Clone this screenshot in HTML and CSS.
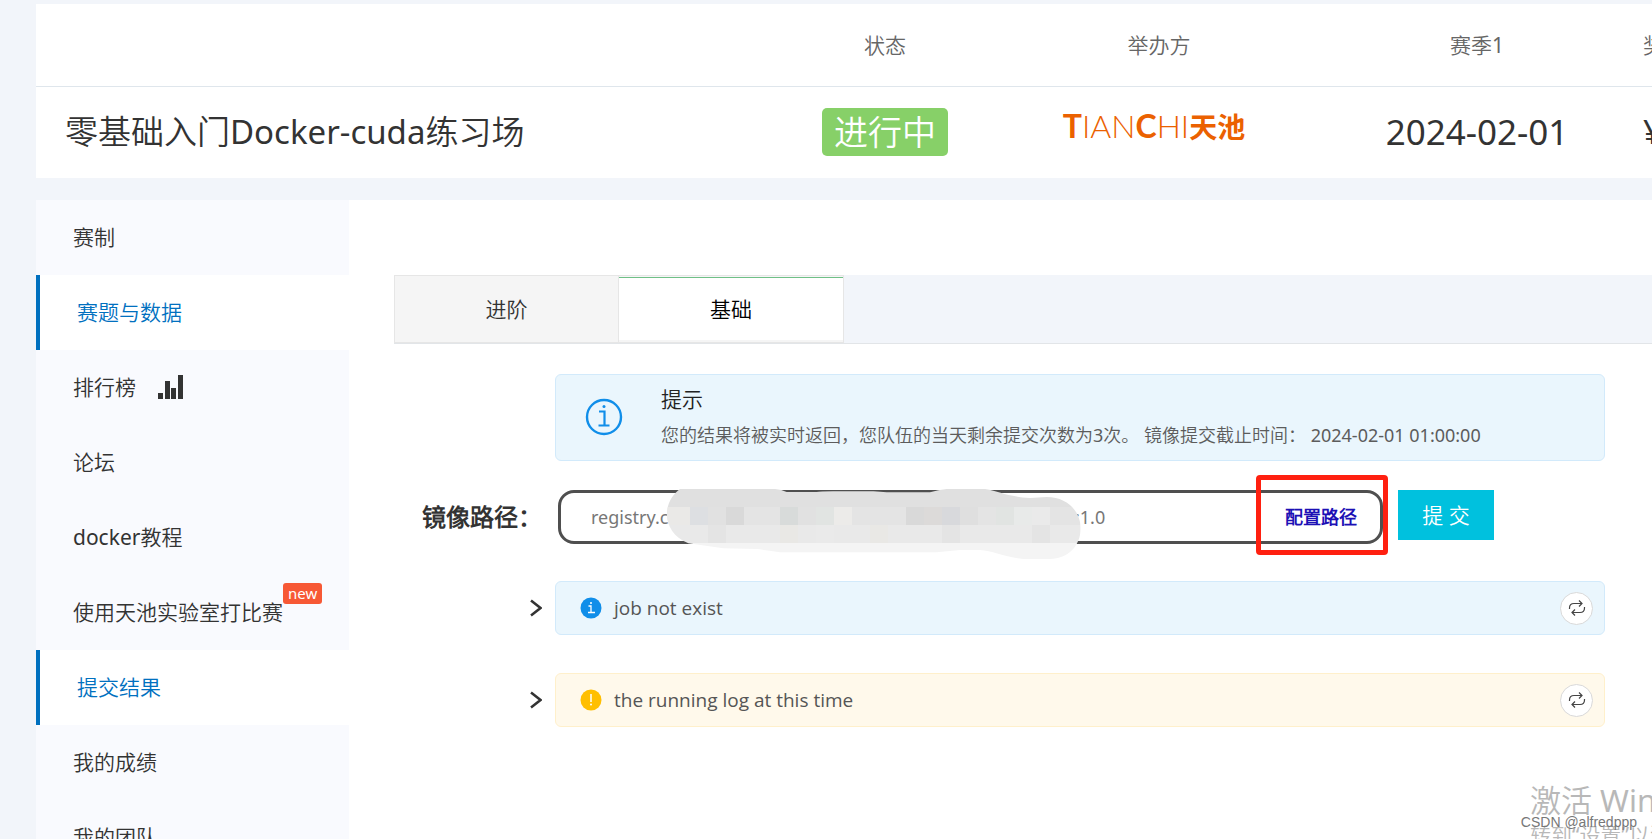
FILE: index.html
```html
<!DOCTYPE html>
<html lang="zh-CN">
<head>
<meta charset="utf-8">
<title>零基础入门Docker-cuda练习场</title>
<link rel="stylesheet" href="styles.css">
</head>
<body>
<div class="page">
  <header class="summary">
    <table class="summary-table">
      <thead>
        <tr><th></th><th class="col-status">状态</th><th class="col-org">举办方</th><th class="col-season">赛季1</th><th class="col-prize">奖金</th></tr>
      </thead>
      <tbody>
        <tr>
          <td class="title">零基础入门Docker-cuda练习场</td>
          <td><span class="status">进行中</span></td>
          <td><span class="logo"><b>T</b>IAN<b>C</b>HI<b class="logo-cn">天池</b></span></td>
          <td class="date">2024-02-01</td>
          <td class="col-prize">¥0</td>
        </tr>
      </tbody>
    </table>
  </header>

  <div class="layout">
    <nav class="sidebar">
      <a class="nav-item" href="#">赛制</a>
      <a class="nav-item active" href="#">赛题与数据</a>
      <a class="nav-item" href="#">排行榜
        <svg class="bars" width="25" height="24" viewBox="0 0 25 24" fill="#333"><path d="M0 18h5v6H0zM7 6h5v18H7zM13 13h5v11h-5zM20 0h5v24h-5z"/></svg>
      </a>
      <a class="nav-item" href="#">论坛</a>
      <a class="nav-item" href="#">docker教程</a>
      <a class="nav-item" href="#">使用天池实验室打比赛<span class="badge">new</span></a>
      <a class="nav-item active" href="#">提交结果</a>
      <a class="nav-item" href="#">我的成绩</a>
      <a class="nav-item" href="#">我的团队</a>
    </nav>

    <main class="content">
      <div class="tabs" role="tablist">
        <button class="tab" role="tab" aria-selected="false">进阶</button>
        <button class="tab selected" role="tab" aria-selected="true">基础</button>
      </div>

      <div class="panel">
        <section class="alert notice">
          <svg class="notice-icon" width="38" height="38" viewBox="0 0 38 38" fill="none" stroke="#108ee9"><circle cx="19" cy="19" r="17" stroke-width="2.400"/><path d="M14 13.500h5.500v14M13.500 27.500h11" stroke-width="2.200"/><circle cx="19" cy="8.500" r="1.500" fill="#108ee9" stroke="none"/></svg>
          <div>
            <h2 class="notice-title">提示</h2>
            <p class="notice-text">您的结果将被实时返回，您队伍的当天剩余提交次数为3次。 镜像提交截止时间： 2024-02-01 01:00:00</p>
          </div>
        </section>

        <form class="submit-row">
          <label class="path-label" for="path">镜像路径：</label>
          <div class="field">
            <input class="path-input" id="path" type="text" value="registry.c">
            <span class="path-tag">:1.0</span>
            <a class="config" href="#">配置路径</a>
            <svg class="smudge" width="430" height="100" viewBox="0 0 1290 300">
              <defs><clipPath id="blob"><path d="M60 60H345Q365 62 380 69H470Q480 67 520 67H640L680 70H810Q835 62 860 60H975C1020 68 1040 82 1110 87L1160 84C1225 84 1262 130 1262 178C1262 230 1225 270 1170 270H1090C1030 264 1000 245 960 243H900L830 250H360Q310 242 290 240L190 238L85 223C40 205 21 170 21 135C21 100 40 75 60 60Z"/></clipPath></defs>
              <g clip-path="url(#blob)">
                <path fill="#e0e0e0" d="M0 50h1290v64H0z"/>
                <path fill="#e4e4e4" d="M0 114h1290v54H0z"/>
                <path fill="#e9e9e9" d="M0 168h1290v54H0z"/>
                <path fill="#f4f4f4" d="M0 222h1290v60H0z"/>
                <path fill="#eae9e7" d="M0 114h90v54H0z"/>
                <path fill="#dddfe2" d="M90 114h54v54H90z"/>
                <path fill="#e1e1e1" d="M144 114h54v54h-54zM414 114h54v54h-54z"/>
                <path fill="#d9d9d9" d="M198 114h54v54h-54zM738 114h54v54h-54z"/>
                <path fill="#d8dbda" d="M360 114h54v54h-54z"/>
                <path fill="#e1e4e2" d="M468 114h54v54h-54zM1008 114h54v54h-54z"/>
                <path fill="#ecebe9" d="M522 114h54v54h-54z"/>
                <path fill="#dcdad9" d="M792 114h54v54h-54z"/>
                <path fill="#d8d9dc" d="M846 114h54v54h-54z"/>
                <path fill="#dfdfdf" d="M900 114h54v54h-54z"/>
                <path fill="#e8eae9" d="M1062 114h54v54h-54z"/>
                <path fill="#eaeaea" d="M1116 114h54v54h-54zM468 168h54v54h-54z"/>
                <path fill="#e4e4e4" d="M144 168h54v54h-54zM846 168h54v54h-54zM1116 168h54v54h-54z"/>
                <path fill="#e9e8e5" d="M360 168h54v54h-54zM630 168h54v54h-54z"/>
              </g>
            </svg>
            <span class="highlight"></span>
          </div>
          <button class="submit" type="button">提 交</button>
        </form>

        <div class="log">
          <button class="toggle" type="button" aria-label="展开"><svg width="12" height="18" viewBox="0 0 12 18" fill="none" stroke="#333" stroke-width="2.500"><path d="M1 1.500l9.500 7.500L1 16.500"/></svg></button>
          <div class="alert log-box">
            <svg width="22" height="22" viewBox="0 0 22 22"><circle cx="11" cy="11" r="10.500" fill="#108ee9"/><path d="M8.500 9h2.500v6.500M8 15.500h7" fill="none" stroke="#fff" stroke-width="1.300"/><circle cx="11" cy="6" r="1" fill="#fff"/></svg>
            <span class="log-text">job not exist</span>
            <button class="refresh" type="button" aria-label="刷新"><svg width="18" height="18" viewBox="0 0 18 18" fill="none" stroke="#444" stroke-width="1.200"><path d="M1.500 10V9q0-4.500 4.500-4.500h8M11 1.500l3 3-3 3M16.500 8v1q0 4.500-4.500 4.500H4M7 10.500l-3 3 3 3"/></svg></button>
          </div>
        </div>

        <div class="log">
          <button class="toggle" type="button" aria-label="展开"><svg width="12" height="18" viewBox="0 0 12 18" fill="none" stroke="#333" stroke-width="2.500"><path d="M1 1.500l9.500 7.500L1 16.500"/></svg></button>
          <div class="alert log-box warning">
            <svg width="22" height="22" viewBox="0 0 22 22"><circle cx="11" cy="11" r="10.500" fill="#ffbf00"/><path d="M11 5v8" fill="none" stroke="#fff" stroke-width="1.500"/><circle cx="11" cy="15.500" r="1" fill="#fff"/></svg>
            <span class="log-text">the running log at this time</span>
            <button class="refresh" type="button" aria-label="刷新"><svg width="18" height="18" viewBox="0 0 18 18" fill="none" stroke="#444" stroke-width="1.200"><path d="M1.500 10V9q0-4.500 4.500-4.500h8M11 1.500l3 3-3 3M16.500 8v1q0 4.500-4.500 4.500H4M7 10.500l-3 3 3 3"/></svg></button>
          </div>
        </div>
      </div>
    </main>
  </div>
  <div class="activation"><div class="activation-title">激活 Windows</div><div class="activation-text">转到“设置”以激活 Windows。</div></div>
  <div class="watermark">CSDN @alfredppp</div>
</div>
</body>
</html>
```

FILE: styles.css
```css
* { box-sizing: border-box; }
body {
  margin: 0;
  background: #f2f5fa;
  color: #333;
  font: 400 21px/32px "Noto Sans", "Noto Sans CJK SC DemiLight", "Noto Sans CJK SC", sans-serif;
}
button, input { font: inherit; color: inherit; margin: 0; padding: 0; border: 0; background: none; }
a { color: inherit; text-decoration: none; }
svg { display: block; flex: none; }

.page { position: relative; display: flex; flex-direction: column; height: 100vh; overflow: hidden; padding: 4px 0 0 36px; }
.summary { flex: none; background: #fff; overflow: hidden; }
.summary-table { width: calc(100% + 34px); table-layout: fixed; border-collapse: collapse; }
.summary-table th { height: 82px; padding: 0; font-weight: 400; color: #666; border-bottom: 1px solid #dfe6ec; }
.summary-table td { height: 92px; padding: 0; text-align: center; font-size: 33px; line-height: 48px; white-space: nowrap; }
.summary-table .title { padding-left: 29px; text-align: left; }
.summary-table .date { font-size: 35px; }
.col-status { width: 244px; }
.col-org { width: 304px; }
.col-season { width: 332px; }
.summary-table .col-prize { width: 43px; text-align: left; white-space: nowrap; }
.status { display: inline-block; padding: 0 12px; border-radius: 5px; background: #87d068; color: #fff; font-size: 34px; line-height: 48px; }
.logo { display: block; color: #eb6100; font: 300 32px/36px Lato, sans-serif; padding: 0 10px 12px 0; }
.logo b { font-weight: 700; }
.logo .logo-cn { font: 700 28px/36px "Noto Sans CJK SC", sans-serif; }

.layout { display: flex; flex: 1; min-height: 0; margin-top: 22px; background: #fff; }
.sidebar { flex: none; width: 313px; background: #f9fafe; }
.nav-item { display: flex; align-items: center; height: 75px; padding: 0 0 2px 37px; white-space: nowrap; }
.nav-item.active { background: #fff; border-left: 4px solid #0070bf; color: #0070bf; }
.bars { margin-left: 22px; }
.badge { align-self: flex-start; margin-top: 8px; padding: 0 5px; border-radius: 3px; background: #f75835; color: #fff; font-size: 15px; line-height: 21px; }

.content { flex: 1; min-width: 0; padding: 75px 0 0 45px; }
.tabs { display: flex; height: 69px; background: #f2f5fa; border-bottom: 1px solid #e2e5e8; }
.tab { width: 225px; border: 1px solid #e6e6e6; background: #f5f5f5; }
.tab.selected { border-left-width: 0; background: #fff; color: #000; box-shadow: inset 0 1px #f5f5f5, inset 0 2px #6fc087, inset 0 -2px #f5f5f5; }

.panel { padding: 30px 47px 0 28px; }
.alert { border: 1px solid #d2eafb; border-radius: 6px; background: #eaf6fd; }
.notice { display: flex; align-items: center; gap: 38px; height: 87px; margin-left: 133px; padding: 0 0 2px 29px; }
.notice-title { margin: 0; font-size: 21px; line-height: 36px; font-weight: 400; color: #222; }
.notice-text { margin: 0; font-size: 18px; line-height: 36px; color: #5c5c5c; white-space: pre; }

.submit-row { display: flex; margin: 29px 111px 0 0; }
.path-label { width: 136px; font-size: 24px; font-weight: 700; line-height: 54px; white-space: nowrap; }
.field { position: relative; display: flex; align-items: center; flex: 1; min-width: 0; height: 54px; padding: 0 23px 0 30px; border: 3px solid #4f4f4f; border-radius: 16px; font-size: 18px; }
.path-input { width: 484px; height: 44px; color: #777; }
.path-tag { color: #777; flex: 1; }
.config { color: #1c10b5; font-weight: 700; }
.smudge { position: absolute; left: 99px; top: -24px; }
.highlight { position: absolute; right: -8px; top: -18px; width: 132px; height: 80px; border: 5px solid #ff2010; border-radius: 4px; }
.submit { width: 96px; height: 50px; margin-left: 15px; background: #00c1de; color: #fff; font-size: 21px; }

.log { display: flex; align-items: center; margin-top: 37px; padding-left: 108px; }
.log + .log { margin-top: 38px; }
.toggle { width: 25px; }
.log-box { display: flex; align-items: center; gap: 12px; flex: 1; height: 54px; padding: 0 11px 0 24px; color: #555; font-size: 19px; }
.log-text { flex: 1; font-family: "Open Sans", sans-serif; }
.warning { border-color: #fff0cb; background: #fff9eb; }
.refresh { display: grid; place-items: center; width: 33px; height: 33px; border: 1px solid #d9d9d9; border-radius: 50%; background: #fff; }

.activation { position: absolute; left: 1530px; top: 779px; color: #b8b8b8; white-space: nowrap; }
.activation-title { font-size: 31px; line-height: 42px; }
.activation-text { font-size: 21px; line-height: 28px; }
.watermark { position: absolute; right: 15px; bottom: 7px; color: #777; font: 14px/20px "Liberation Sans", sans-serif; }
```
